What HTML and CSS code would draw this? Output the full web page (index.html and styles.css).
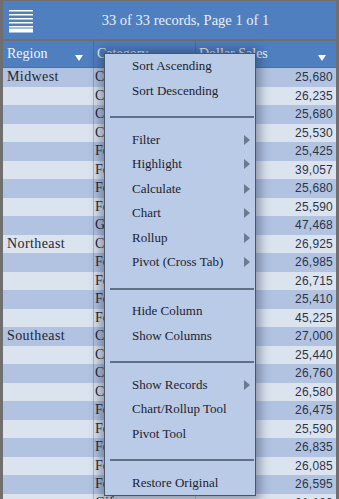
FILE: index.html
```html
<!DOCTYPE html>
<html lang="en">
<head>
    <meta charset="UTF-8">
    <meta name="viewport" content="width=device-width, initial-scale=1.0">
    <title>Dollar Sales</title>
    <link rel="stylesheet" href="styles.css">
</head>
<body>
    <div class="grid">
        <div class="titlebar">
            <svg class="list-icon" width="24" height="23" viewBox="0 0 24 23">
                <rect x="0" y="0" width="24" height="1.5" fill="#fff"/>
                <rect x="0" y="4" width="24" height="1.5" fill="#fff"/>
                <rect x="0" y="8" width="24" height="1.5" fill="#fff"/>
                <rect x="0" y="12" width="24" height="1.5" fill="#fff"/>
                <rect x="0" y="16" width="24" height="1.5" fill="#fff"/>
                <rect x="0" y="18.5" width="24" height="4" fill="#fff"/>
            </svg>
            <div class="title">33 of 33 records, Page 1 of 1</div>
        </div>

        <div class="head">
            <div class="hcell region">Region <span class="sort"></span></div>
            <div class="hcell category">Category</div>
            <div class="hcell sales">Dollar Sales <span class="sort"></span></div>
        </div>

        <div class="rows">
            <div class="row"><div class="cell region">Midwest</div><div class="cell category">Coffee</div><div class="cell sales">25,680</div></div>
            <div class="row"><div class="cell region"></div><div class="cell category">Coffee</div><div class="cell sales">26,235</div></div>
            <div class="row"><div class="cell region"></div><div class="cell category">Coffee</div><div class="cell sales">25,680</div></div>
            <div class="row"><div class="cell region"></div><div class="cell category">Coffee</div><div class="cell sales">25,530</div></div>
            <div class="row"><div class="cell region"></div><div class="cell category">Food</div><div class="cell sales">25,425</div></div>
            <div class="row"><div class="cell region"></div><div class="cell category">Food</div><div class="cell sales">39,057</div></div>
            <div class="row"><div class="cell region"></div><div class="cell category">Food</div><div class="cell sales">25,680</div></div>
            <div class="row"><div class="cell region"></div><div class="cell category">Food</div><div class="cell sales">25,590</div></div>
            <div class="row"><div class="cell region"></div><div class="cell category">Gifts</div><div class="cell sales">47,468</div></div>
            <div class="row"><div class="cell region">Northeast</div><div class="cell category">Coffee</div><div class="cell sales">26,925</div></div>
            <div class="row"><div class="cell region"></div><div class="cell category">Food</div><div class="cell sales">26,985</div></div>
            <div class="row"><div class="cell region"></div><div class="cell category">Food</div><div class="cell sales">26,715</div></div>
            <div class="row"><div class="cell region"></div><div class="cell category">Food</div><div class="cell sales">25,410</div></div>
            <div class="row"><div class="cell region"></div><div class="cell category">Food</div><div class="cell sales">45,225</div></div>
            <div class="row"><div class="cell region">Southeast</div><div class="cell category">Coffee</div><div class="cell sales">27,000</div></div>
            <div class="row"><div class="cell region"></div><div class="cell category">Coffee</div><div class="cell sales">25,440</div></div>
            <div class="row"><div class="cell region"></div><div class="cell category">Coffee</div><div class="cell sales">26,760</div></div>
            <div class="row"><div class="cell region"></div><div class="cell category">Coffee</div><div class="cell sales">26,580</div></div>
            <div class="row"><div class="cell region"></div><div class="cell category">Food</div><div class="cell sales">26,475</div></div>
            <div class="row"><div class="cell region"></div><div class="cell category">Food</div><div class="cell sales">25,590</div></div>
            <div class="row"><div class="cell region"></div><div class="cell category">Food</div><div class="cell sales">26,835</div></div>
            <div class="row"><div class="cell region"></div><div class="cell category">Food</div><div class="cell sales">26,085</div></div>
            <div class="row"><div class="cell region"></div><div class="cell category">Food</div><div class="cell sales">26,595</div></div>
            <div class="row"><div class="cell region"></div><div class="cell category">Gifts</div><div class="cell sales">61,180</div></div>
        </div>

        <!-- column menu -->
        <div class="popup">
            <div class="item">Sort Ascending</div>
            <div class="item">Sort Descending</div>
            <div class="sep"></div>
            <div class="item">Filter <span class="arrow"></span></div>
            <div class="item">Highlight <span class="arrow"></span></div>
            <div class="item">Calculate <span class="arrow"></span></div>
            <div class="item">Chart <span class="arrow"></span></div>
            <div class="item">Rollup <span class="arrow"></span></div>
            <div class="item">Pivot (Cross Tab) <span class="arrow"></span></div>
            <div class="sep"></div>
            <div class="item">Hide Column</div>
            <div class="item">Show Columns</div>
            <div class="sep"></div>
            <div class="item">Show Records <span class="arrow"></span></div>
            <div class="item">Chart/Rollup Tool</div>
            <div class="item">Pivot Tool</div>
            <div class="sep"></div>
            <div class="item">Restore Original</div>
        </div>
    </div>
</body>
</html>
```

FILE: styles.css
```css
html, body {
    height: 100%;
    overflow: hidden;
}
body {
    margin: 0;
    padding: 0;
    background-color: #6f6f6f;
    font-family: "Liberation Serif", "Times New Roman", serif;
}
.grid {
    position: relative;
    margin: 1px 3px 0 3px;
    background-color: #dbe3ef;
}
.titlebar {
    display: flex;
    align-items: center;
    height: 38px;
    background-color: #4f7fbf;
    border-bottom: 2px solid #6f6f6f;
}
.list-icon {
    display: block;
    margin: 2px 2px 0 6px;
}
.title {
    flex: 1;
    text-align: center;
    color: #e8eef8;
    font-size: 14.5px;
}
.head {
    display: flex;
    height: 26px;
    background-color: #4f7fbf;
    border-bottom: 1px solid #4373b3;
}
.hcell {
    display: flex;
    align-items: center;
    justify-content: space-between;
    color: #f0f4fa;
    font-size: 14px;
    padding: 0 10px 0 3px;
    border-left: 1px solid #416fae;
    box-sizing: border-box;
}
.hcell.region {
    border-left: none;
    padding-left: 4px;
}
.region {
    width: 90px;
}
.category {
    width: 102px;
}
.sales {
    width: 141px;
}
.sort {
    margin-top: 8px;
    width: 0;
    height: 0;
    border-left: 4px solid transparent;
    border-right: 4px solid transparent;
    border-top: 6px solid #ffffff;
}
.row {
    display: flex;
    height: 18px;
    background-color: #dbe3ef;
}
.row:nth-child(odd) {
    height: 19px;
    background-color: #b1c3e1;
}
.cell {
    box-sizing: border-box;
    font-size: 14px;
    line-height: 18px;
    color: #1f2633;
    white-space: nowrap;
    overflow: hidden;
}
.cell.region {
    padding-left: 4px;
    letter-spacing: 0.4px;
}
.cell.category {
    padding-left: 1px;
    border-left: 1px solid rgba(60, 80, 120, 0.3);
}
.cell.sales {
    padding-right: 3px;
    text-align: right;
    font-family: "Liberation Sans", Arial, sans-serif;
    font-size: 12px;
    letter-spacing: 0.2px;
    color: #2b3447;
    border-left: 1px solid rgba(60, 80, 120, 0.2);
}
.popup {
    position: absolute;
    left: 101px;
    top: 52px;
    width: 150px;
    background-color: #b9cbe6;
    border: 1px solid #4c5566;
    box-shadow: 0 0 10px 4px rgba(30, 40, 70, 0.42);
}
.item {
    display: flex;
    align-items: center;
    justify-content: space-between;
    height: 24.5px;
    padding: 0 5px 0 27px;
    font-size: 13px;
    color: #1d2230;
}
.arrow {
    width: 0;
    height: 0;
    border-top: 5px solid transparent;
    border-bottom: 5px solid transparent;
    border-left: 6px solid #6b7a8f;
}
.sep {
    height: 24.5px;
    box-sizing: border-box;
    padding-top: 13px;
}
.sep::before {
    content: "";
    display: block;
    margin: 0 1px 0 5px;
    border-top: 2px solid #5f6f86;
}
```
